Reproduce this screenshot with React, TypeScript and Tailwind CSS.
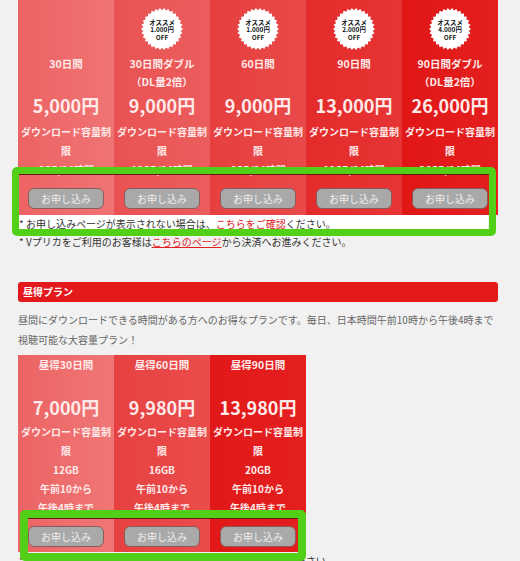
import React from 'react';

type Plan = {
  badge?: string;
  title: string[];
  price: string;
  lines: string[];
  bg: string;
};

const topPlans: Plan[] = [
  { title: ['30日間'], price: '5,000円', lines: ['ダウンロード容量制限', '6GB/24時間'], bg: 'bg-linear-to-r from-[#ec6363] to-[#f07474]' },
  { badge: '1.000円', title: ['30日間ダブル', '（DL量2倍）'], price: '9,000円', lines: ['ダウンロード容量制限', '12GB/24時間'], bg: 'bg-linear-to-r from-[#e95252] to-[#ec5d5d]' },
  { badge: '1.000円', title: ['60日間'], price: '9,000円', lines: ['ダウンロード容量制限', '6GB/24時間'], bg: 'bg-linear-to-r from-[#e63f3f] to-[#e94949]' },
  { badge: '2.000円', title: ['90日間'], price: '13,000円', lines: ['ダウンロード容量制限', '18GB/24時間'], bg: 'bg-linear-to-r from-[#e42b2b] to-[#e73434]' },
  { badge: '4.000円', title: ['90日間ダブル', '（DL量2倍）'], price: '26,000円', lines: ['ダウンロード容量制限', '36GB/24時間'], bg: 'bg-linear-to-r from-[#e11616] to-[#e41f1f]' },
];

const dayPlans: Plan[] = [
  { title: ['昼得30日間'], price: '7,000円', lines: ['ダウンロード容量制限', '12GB', '午前10から', '午後4時まで'], bg: 'bg-linear-to-r from-[#ec6464] to-[#f07676]' },
  { title: ['昼得60日間'], price: '9,980円', lines: ['ダウンロード容量制限', '16GB', '午前10から', '午後4時まで'], bg: 'bg-linear-to-r from-[#e74141] to-[#ea4c4c]' },
  { title: ['昼得90日間'], price: '13,980円', lines: ['ダウンロード容量制限', '20GB', '午前10から', '午後4時まで'], bg: 'bg-linear-to-r from-[#e11818] to-[#e41f1f]' },
];

// white starburst sticker with the discount text
function Badge({ amount }: { amount: string }) {
  const pts: string[] = [];
  const n = 60;
  for (let i = 0; i < n; i++) {
    const a = (i / n) * Math.PI * 2;
    const r = i % 2 === 0 ? 21 : 18.8;
    pts.push(`${(21 + r * Math.cos(a)).toFixed(2)},${(21 + r * Math.sin(a)).toFixed(2)}`);
  }
  const font = "'Noto Sans CJK JP', sans-serif";
  return (
    <svg width="42" height="42" viewBox="0 0 42 42">
      <polygon points={pts.join(' ')} fill="#ffffff" />
      <text x="21" y="16.6" textAnchor="middle" fontSize="6.4" fontWeight="700" fill="#141414" fontFamily={font}>オススメ</text>
      <text x="21" y="24.2" textAnchor="middle" fontSize="6.4" fontWeight="700" fill="#141414" fontFamily={font}>{amount}</text>
      <text x="21" y="31.8" textAnchor="middle" fontSize="6.4" fontWeight="700" fill="#141414" fontFamily={font}>OFF</text>
    </svg>
  );
}

function ApplyButton() {
  return (
    <div className="w-[76px] h-[21px] rounded-[6px] bg-[#a9a9a9] border border-[#8b5b5b] text-[#eeeeee] text-[10px] leading-[19px] text-center font-normal">
      お申し込み
    </div>
  );
}

function TopCol({ plan }: { plan: Plan }) {
  return (
    <div className={`w-[96px] h-[215px] flex flex-col items-center text-[#ffeaea] font-bold ${plan.bg}`}>
      <div className="h-[55px] w-full flex justify-center pt-[8px]">
        {plan.badge && <Badge amount={plan.badge} />}
      </div>
      <div className="h-[38px] text-[10.5px] leading-[18px] text-center">
        {plan.title.map((t) => (
          <div key={t}>{t}</div>
        ))}
      </div>
      <div className="text-[18px] leading-[24px]">{plan.price}</div>
      <div className="mt-[5px] w-full text-[10px] leading-[19px] text-center">
        {plan.lines.map((l) => (
          <div key={l}>{l}</div>
        ))}
      </div>
      <div className="mt-auto mb-[6px]">
        <ApplyButton />
      </div>
    </div>
  );
}

function DayCol({ plan }: { plan: Plan }) {
  return (
    <div className={`w-[96px] h-[197px] flex flex-col items-center text-[#ffeaea] font-bold ${plan.bg}`}>
      <div className="pt-[1px] text-[10.5px] leading-[18px]">{plan.title[0]}</div>
      <div className="mt-[21px] text-[18px] leading-[24px]">{plan.price}</div>
      <div className="mt-[3px] w-full text-[10px] leading-[19px] text-center">
        {plan.lines.map((l) => (
          <div key={l}>{l}</div>
        ))}
      </div>
      <div className="mt-auto mb-[5px]">
        <ApplyButton />
      </div>
    </div>
  );
}

export default function App() {
  return (
    <div className="relative w-[520px] h-[561px] overflow-hidden bg-[#f1f1f1] pl-[18px] font-['Noto_Sans_CJK_JP',sans-serif]">
      <div className="flex w-[480px]">
        {topPlans.map((p, i) => (
          <TopCol key={i} plan={p} />
        ))}
      </div>

      <div className="w-[470px] h-[18px] bg-white pl-[1px] text-[10px] leading-[18px] text-[#333333] whitespace-nowrap">
        * お申し込みページが表示されない場合は、<span className="text-[#e0201f]">こちらをご確認</span>ください。
      </div>
      <div className="h-[18px] pl-[1px] text-[10px] leading-[18px] text-[#333333] whitespace-nowrap">
        * Vプリカをご利用のお客様は<span className="text-[#e0201f] underline">こちらのページ</span>から決済へお進みください。
      </div>

      <div className="mt-[31px] w-[480px] h-[20px] rounded-[3px] bg-[#e3191c] pl-[5px] text-[10px] leading-[20px] font-bold text-white">
        昼得プラン
      </div>

      <div className="mt-[8px] text-[10px] leading-[20px] text-[#666666] whitespace-nowrap">
        昼間にダウンロードできる時間がある方へのお得なプランです。毎日、日本時間午前10時から午後4時まで
        <br />
        視聴可能な大容量プラン！
      </div>

      <div className="mt-[5px] flex w-[288px]">
        {dayPlans.map((p, i) => (
          <DayCol key={i} plan={p} />
        ))}
      </div>

      <div className="h-[18px] pl-[1px] text-[10px] leading-[18px] text-[#333333] whitespace-nowrap">
        * お申し込みページが表示されない場合は、<span className="text-[#e0201f]">こちらをご確認</span>ください。
      </div>

      {/* highlight annotations */}
      <div className="absolute left-[12px] top-[167px] w-[484px] h-[69px] rounded-[5px] border-[7px] border-[#52d017] shadow-[inset_0_1px_0_#6b1616]" />
      <div className="absolute left-[20px] top-[510px] w-[286px] h-[51px] rounded-[5px] border-[8px] border-[#52d017] shadow-[inset_0_1px_0_#6b1616]" />
    </div>
  );
}
